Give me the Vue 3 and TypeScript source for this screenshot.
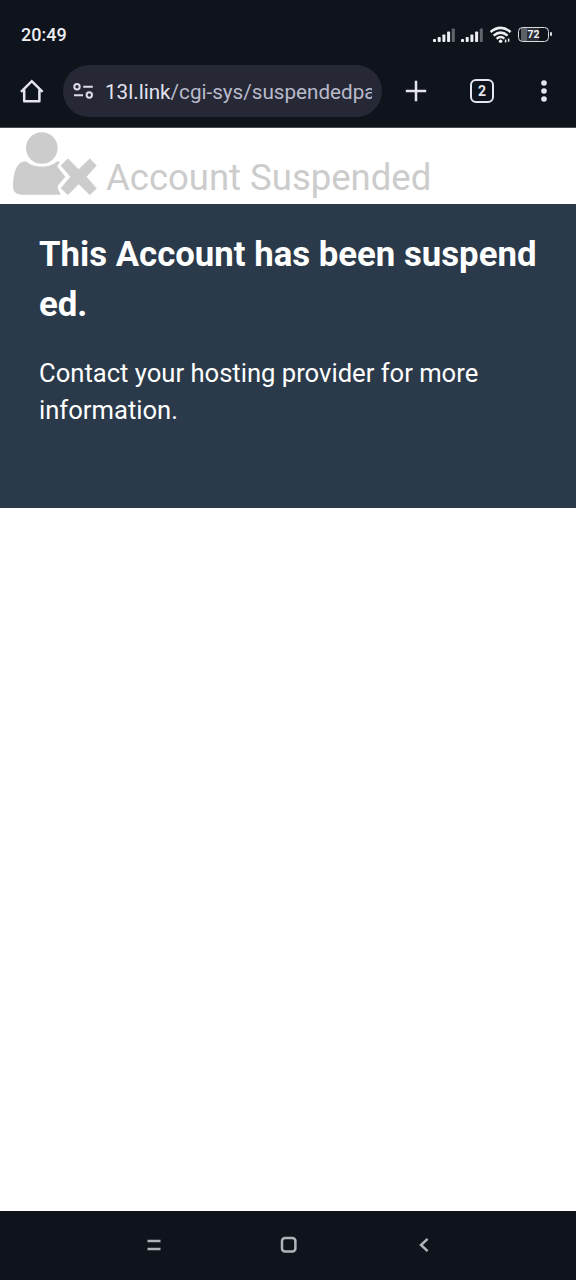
<script setup lang="ts">
interface Bar {
  x: number
  h: number
  dim?: boolean
}

const bars: Bar[] = [
  { x: 0, h: 3 },
  { x: 4.7, h: 5 },
  { x: 9.4, h: 7.5 },
  { x: 14.1, h: 10.5 },
  { x: 18.8, h: 13.5, dim: true },
]
const sims = [1, 2]
</script>

<template>
  <div class="phone">
    <header class="chrome">
      <div class="status">
        <span class="clock">20:49</span>
        <div class="indicators">
          <svg v-for="sim in sims" :key="sim" class="signal" width="22" height="16" viewBox="0 0 22 16">
            <rect
              v-for="bar in bars"
              :key="bar.x"
              :x="bar.x"
              :y="15 - bar.h"
              width="3"
              :height="bar.h"
              rx="0.8"
              :fill="bar.dim ? '#62656c' : '#eceef2'"
            />
          </svg>
          <svg class="wifi" width="24" height="18" viewBox="0 0 24 18" fill="none" stroke="#eceef2" stroke-width="2.5">
            <path d="M1.6 6Q11.6-2.2 21.6 6" />
            <path d="M4.6 9.6Q11.6 3.6 18.6 9.6" />
            <path d="M7.6 12.9Q11.6 9.4 15.4 12.6" />
            <circle cx="11.6" cy="15.2" r="1.8" fill="#eceef2" stroke="none" />
            <path d="M16.6 13.4v3.2M19.6 12.6v3.2" stroke-width="1.5" />
          </svg>
          <div class="battery"><span class="level">72</span></div>
        </div>
      </div>
      <div class="toolbar">
        <svg class="home" width="26" height="26" viewBox="0 0 26 26" fill="none" stroke="#e6e5ef" stroke-width="2.5" stroke-linejoin="round">
          <path d="M2 13.8 12.8 3.2 23.6 13.8" stroke-linejoin="miter" />
          <path d="M5.2 11.5V23.3H20.4V11.5" />
        </svg>
        <div class="address">
          <svg class="tune" width="22" height="18" viewBox="0 0 22 18" fill="none" stroke="#dcdce8" stroke-width="2">
            <circle cx="5" cy="4.8" r="2.7" />
            <path d="M11.2 4.7H20.8M2 13.3H11" />
            <circle cx="17.3" cy="13" r="2.7" />
          </svg>
          <span class="url"><span class="host">13l.link</span>/cgi-sys/suspendedpa</span>
        </div>
        <svg class="plus" width="22" height="22" viewBox="0 0 22 22" stroke="#e6e5ef" stroke-width="2.5">
          <path d="M.8 11H21.2M11 .8V21.2" />
        </svg>
        <div class="tabs">2</div>
        <svg class="dots" width="8" height="24" viewBox="0 0 8 24" fill="#e6e5ef">
          <circle cx="4" cy="4" r="2.8" />
          <circle cx="4" cy="12" r="2.8" />
          <circle cx="4" cy="20" r="2.8" />
        </svg>
      </div>
    </header>

    <main class="page">
      <div class="title-row">
        <svg class="user" width="84" height="64" viewBox="13 132 84 64" fill="#cccccc">
          <circle cx="41.8" cy="148" r="15.8" />
          <path d="M26 161.2C33 168.2 50 168.6 57 161.2L60 161.8 57.2 166.6 65.3 176.7 58 185.5Q56.8 188 61 194.8H21Q13 194 13 186.5C13.2 173 16.5 161 26 161.2Z" />
          <path d="M67.8 158.8 78.7 169.4 89.8 158.8 96.4 165.6 86.2 176.7 96.4 188.4 89.8 194.8 78.7 184 67.8 194.8 61 188.2 70.6 176.7 61 165.6Z" stroke="#cccccc" stroke-width="0.6" stroke-linejoin="round" />
        </svg>
        <span class="title">Account Suspended</span>
      </div>
      <section class="notice">
        <h1 class="heading">This Account has been suspended.</h1>
        <p class="body">Contact your hosting provider for more information.</p>
      </section>
    </main>

    <nav class="navbar">
      <svg width="16" height="16" viewBox="0 0 16 16" stroke="#b2b3b8" stroke-width="2.4">
        <path d="M1.5 4H14.5M1.5 12H14.5" />
      </svg>
      <svg width="18" height="18" viewBox="0 0 18 18" fill="none" stroke="#b2b3b8" stroke-width="2.5">
        <rect x="2" y="2.1" width="13.4" height="13.4" rx="3" />
      </svg>
      <svg width="16" height="16" viewBox="0 0 16 16" fill="none" stroke="#b2b3b8" stroke-width="2.5">
        <path d="M11.6 1.8 5 8 11.6 14.2" />
      </svg>
    </nav>
  </div>
</template>

<style>
body {
  background: #ffffff;
}
</style>

<style scoped>
.phone {
  display: flex;
  flex-direction: column;
  width: 576px;
  height: 1280px;
  overflow: hidden;
  background: #ffffff;
  font-family: Roboto, "Liberation Sans", sans-serif;
}
svg {
  display: block;
  flex: none;
}
.chrome {
  box-sizing: border-box;
  height: 128px;
  flex: none;
  background: #0f131c;
  border-bottom: 1px solid #4a4b50;
}
.status {
  box-sizing: border-box;
  display: flex;
  align-items: center;
  justify-content: space-between;
  height: 65px;
  padding: 4px 25px 0 21px;
}
.clock {
  color: #eceef2;
  font-size: 18px;
  font-weight: 500;
  line-height: 20px;
}
.indicators {
  display: flex;
  align-items: center;
}
.signal {
  margin-right: 6px;
}
.wifi {
  margin-right: 5px;
}
.battery {
  position: relative;
  box-sizing: border-box;
  width: 31px;
  height: 15px;
  margin-right: 2px;
  border: 1.6px solid #d9dbe0;
  border-radius: 4.5px;
  background: linear-gradient(90deg, transparent 2px, #5d6067 2px, #5d6067 8px, #2b2f37 8px, #2b2f37 20px, transparent 20px);
}
.battery::after {
  content: "";
  position: absolute;
  top: 4px;
  right: -4px;
  width: 2px;
  height: 4px;
  border-radius: 1px;
  background: #d9dbe0;
}
.level {
  display: block;
  color: #f2f3f5;
  font-size: 10.5px;
  font-weight: 700;
  line-height: 13px;
  text-align: center;
}
.toolbar {
  display: flex;
  align-items: center;
  height: 52px;
  padding-left: 19px;
}
.address {
  box-sizing: border-box;
  display: flex;
  align-items: center;
  width: 319px;
  height: 52px;
  margin-left: 18px;
  padding: 0 10px 0 9px;
  border-radius: 26px;
  background: #262836;
}
.url {
  flex: 1;
  min-width: 0;
  margin-left: 11px;
  padding-top: 2px;
  overflow: hidden;
  color: #b9bacb;
  font-size: 20.65px;
  line-height: 28px;
  white-space: nowrap;
}
.host {
  color: #e2e2ee;
}
.plus {
  margin-left: 23px;
}
.tabs {
  box-sizing: border-box;
  width: 24px;
  height: 24px;
  margin-left: 43px;
  border: 2.4px solid #e6e5ef;
  border-radius: 6px;
  color: #e6e5ef;
  font-size: 14px;
  font-weight: 700;
  line-height: 20px;
  text-align: center;
}
.dots {
  margin-left: 46px;
}
.page {
  flex: 1;
}
.title-row {
  box-sizing: border-box;
  display: flex;
  height: 76px;
  padding: 4px 0 0 13px;
}
.title {
  margin: 25px 0 0 9px;
  color: #cccccc;
  font-size: 36.5px;
  line-height: 42px;
  white-space: nowrap;
}
.notice {
  box-sizing: border-box;
  height: 304px;
  padding: 25px 37px 0 39px;
  background: #2b3a4a;
  color: #ffffff;
}
.heading {
  margin: 0;
  font-size: 34.75px;
  font-weight: 700;
  line-height: 50px;
  word-break: break-all;
}
.body {
  margin: 26px 0 0;
  font-size: 25.6px;
  line-height: 37px;
}
.navbar {
  box-sizing: border-box;
  display: flex;
  align-items: center;
  justify-content: space-between;
  height: 69px;
  padding: 0 144px 1px 146px;
  background: #0f131c;
}
</style>
